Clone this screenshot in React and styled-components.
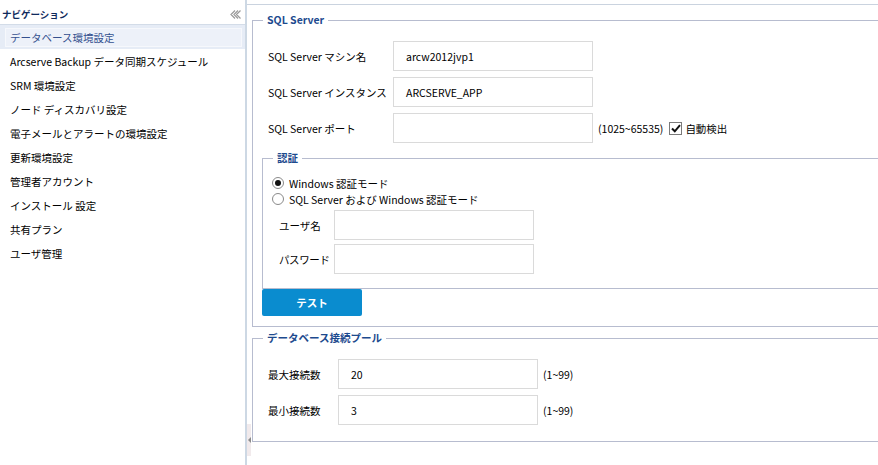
import React from 'react';
import styled, { createGlobalStyle } from 'styled-components';

const GlobalStyle = createGlobalStyle`
  html, body {
    margin: 0;
    padding: 0;
    background: #fff;
  }
  body {
    font-family: "Noto Sans CJK JP", "Liberation Sans", sans-serif;
    font-size: 10.5px;
    color: #000;
  }
`;

const Shell = styled.div`
  display: flex;
  width: 878px;
  height: 465px;
  overflow: hidden;
  background: #fff;
`;

const Sidebar = styled.aside`
  width: 247px;
  flex: none;
  box-sizing: border-box;
  border-right: 2px solid #cdd8e4;
  display: flex;
  flex-direction: column;
`;

const SideHeader = styled.div`
  height: 25px;
  border-bottom: 1px solid #d3dce8;
  display: flex;
  align-items: center;
  justify-content: space-between;
  padding: 4px 4px 0 2px;
  box-sizing: border-box;
  font-size: 9.5px;
  font-weight: bold;
  color: #0f2a5c;
`;

const NavList = styled.ul`
  list-style: none;
  margin: 0;
  padding: 0;
`;

const NavItem = styled.li`
  height: 24px;
  padding: 3px 3px 2px 5px;
  box-sizing: border-box;
  background: ${p => (p.$active ? '#e6ecf6' : 'transparent')};
`;

const NavLabel = styled.span`
  display: flex;
  align-items: center;
  height: 100%;
  box-sizing: border-box;
  padding-left: 4px;
  border: 1px solid ${p => (p.$active ? '#f6f8fc' : 'transparent')};
  background: ${p => (p.$active ? '#edf1f9' : 'transparent')};
  color: ${p => (p.$active ? '#34508f' : '#000')};
  white-space: nowrap;
`;

const Main = styled.main`
  flex: 1;
  position: relative;
  margin-top: 4px;
  border-top: 1px solid #cad3df;
  padding: 7px 0 0 5px;
  overflow: hidden;
`;

const Group = styled.fieldset`
  margin: ${p => p.$margin || '0'};
  padding: ${p => p.$padding || '0'};
  border: 1px solid #b7bccf;
  width: ${p => p.$width || '700px'};
  min-width: 0;
  box-sizing: border-box;
`;

const Legend = styled.legend`
  margin-left: 10px;
  padding: 0 4px;
  line-height: 16px;
  font-size: 10.5px;
  font-weight: bold;
  color: #1d4a8e;
`;

// holds the rows of a group, indented from the group's left edge
const GroupBody = styled.div`
  padding-left: ${p => p.$indent || '15px'};
`;

const FormRow = styled.div`
  display: grid;
  grid-template-columns: ${p => p.$label || '125px'} 200px auto;
  align-items: center;
  margin-bottom: ${p => p.$gap || '6px'};
  &:last-child {
    margin-bottom: 0;
  }
`;

const Label = styled.span`
  white-space: nowrap;
  letter-spacing: ${p => p.$tight ? '-0.4px' : 'normal'};
`;

const TextBox = styled.div`
  height: 30px;
  box-sizing: border-box;
  border: 1px solid #dadada;
  background: #fff;
  display: flex;
  align-items: center;
  padding-left: 12px;
`;

const Hint = styled.span`
  display: flex;
  align-items: center;
  gap: 6px;
  padding-left: 5px;
  white-space: nowrap;
`;

const CheckLabel = styled.span`
  display: flex;
  align-items: center;
  gap: 3px;
`;

const CheckBox = styled.span`
  width: 13px;
  height: 13px;
  box-sizing: border-box;
  border: 1px solid #7a7a7a;
  background: #fff;
  display: inline-flex;
  align-items: center;
  justify-content: center;
`;

const RadioList = styled.div`
  display: flex;
  flex-direction: column;
  padding-left: 9px;
  margin-bottom: 3px;
`;

const RadioRow = styled.label`
  display: flex;
  align-items: center;
  gap: 5px;
  height: 16px;
`;

const Radio = styled.span`
  width: 12px;
  height: 12px;
  box-sizing: border-box;
  border-radius: 50%;
  border: 1px solid #8a8a8a;
  background: #fff;
  display: inline-flex;
  align-items: center;
  justify-content: center;
  &::after {
    content: '';
    width: 6px;
    height: 6px;
    border-radius: 50%;
    background: ${p => (p.$checked ? '#111' : 'transparent')};
  }
`;

const TestButton = styled.button`
  display: block;
  width: 100px;
  height: 27px;
  margin: 0 0 0 9px;
  border: none;
  border-radius: 2px;
  background: #0a8ccf;
  color: #fff;
  font-family: inherit;
  font-size: 10.5px;
  font-weight: bold;
  padding: 0;
`;

const SplitHandle = styled.div`
  position: absolute;
  left: 0;
  top: 419px;
  width: 4px;
  height: 32px;
  background: #f1eaec;
  display: flex;
  align-items: center;
  justify-content: center;
`;

const CollapseIcon = () => (
  <svg width="11" height="9" viewBox="0 0 11 9">
    <path d="M5 0.5 L1 4.5 L5 8.5 M8 0.5 L4 4.5 L8 8.5 M10.5 0.5 L6.5 4.5 L10.5 8.5" fill="none" stroke="#9a9a9a" strokeWidth="1.2" />
  </svg>
);

const navItems = [
  'データベース環境設定',
  'Arcserve Backup データ同期スケジュール',
  'SRM 環境設定',
  'ノード ディスカバリ設定',
  '電子メールとアラートの環境設定',
  '更新環境設定',
  '管理者アカウント',
  'インストール 設定',
  '共有プラン',
  'ユーザ管理',
];

export default function App() {
  return (
    <>
      <GlobalStyle />
      <Shell>
        <Sidebar>
          <SideHeader>
            <span>ナビゲーション</span>
            <CollapseIcon />
          </SideHeader>
          <NavList>
            {navItems.map((item, i) => (
              <NavItem key={item} $active={i === 0}>
                <NavLabel $active={i === 0}>{item}</NavLabel>
              </NavItem>
            ))}
          </NavList>
        </Sidebar>
        <Main>
          <SplitHandle>
            <svg width="3" height="6" viewBox="0 0 3 6">
              <path d="M3 0 L0 3 L3 6 Z" fill="#8c8c8c" />
            </svg>
          </SplitHandle>
          <Group $padding="13px 0 10px 0">
            <Legend>SQL Server</Legend>
            <GroupBody>
              <FormRow>
                <Label>SQL Server マシン名</Label>
                <TextBox>arcw2012jvp1</TextBox>
              </FormRow>
              <FormRow>
                <Label>SQL Server インスタンス</Label>
                <TextBox>ARCSERVE_APP</TextBox>
              </FormRow>
              <FormRow>
                <Label>SQL Server ポート</Label>
                <TextBox />
                <Hint>
                  (1025~65535)
                  <CheckLabel>
                    <CheckBox>
                      <svg width="10" height="9" viewBox="0 0 10 9">
                        <path d="M1 4.5 L3.8 7.3 L9 1.2" fill="none" stroke="#111" strokeWidth="2" />
                      </svg>
                    </CheckBox>
                    自動検出
                  </CheckLabel>
                </Hint>
              </FormRow>
            </GroupBody>
            <Group $margin="7px 0 0 9px" $padding="9px 0 14px 0">
              <Legend>認証</Legend>
              <RadioList>
                <RadioRow>
                  <Radio $checked />
                  Windows 認証モード
                </RadioRow>
                <RadioRow>
                  <Radio />
                  SQL Server および Windows 認証モード
                </RadioRow>
              </RadioList>
              <GroupBody $indent="16px">
                <FormRow $label="55px" $gap="4px">
                  <Label>ユーザ名</Label>
                  <TextBox />
                </FormRow>
                <FormRow $label="55px" $gap="4px">
                  <Label $tight>パスワード</Label>
                  <TextBox />
                </FormRow>
              </GroupBody>
            </Group>
            <TestButton>テスト</TestButton>
          </Group>
          <Group $margin="3px 0 0 0" $padding="13px 0 16px 0">
            <Legend>データベース接続プール</Legend>
            <GroupBody>
              <FormRow $label="70px">
                <Label>最大接続数</Label>
                <TextBox>20</TextBox>
                <Hint>(1~99)</Hint>
              </FormRow>
              <FormRow $label="70px">
                <Label>最小接続数</Label>
                <TextBox>3</TextBox>
                <Hint>(1~99)</Hint>
              </FormRow>
            </GroupBody>
          </Group>
        </Main>
      </Shell>
    </>
  );
}
